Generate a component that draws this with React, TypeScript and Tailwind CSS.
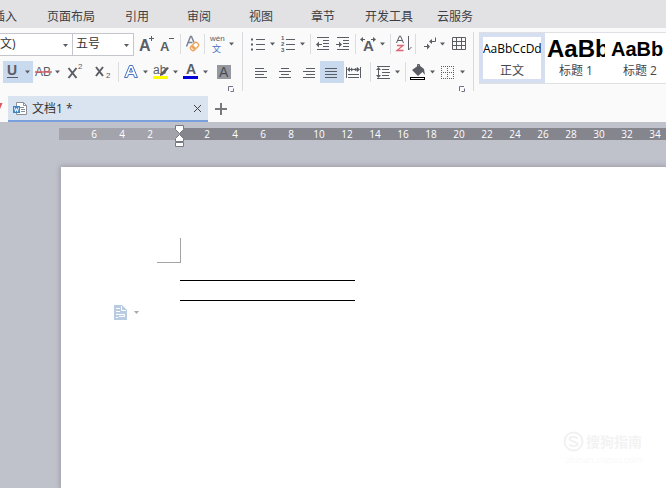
import type { ReactNode } from "react";

const UI = "font-['Open_Sans','Noto_Sans_CJK_SC',sans-serif]";
const COMPACT = "font-['Liberation_Sans','Noto_Sans_CJK_SC',sans-serif]";
const INK = "#5b5d64";
const BLUE = "#4472c4";

const menus = ["插入", "页面布局", "引用", "审阅", "视图", "章节", "开发工具", "云服务"];
const leftTicks = [6, 4, 2];
const rightTicks = [2, 4, 6, 8, 10, 12, 14, 16, 18, 20, 22, 24, 26, 28, 30, 32, 34];

function Tool({ label, w, active, children }: { label: string; w: number; active?: boolean; children: ReactNode }) {
  return (
    <button
      type="button"
      aria-label={label}
      aria-pressed={active}
      className={`h-[22px] shrink-0 ${active ? "bg-[#c9d9ee]" : "hover:bg-[#e6edf7]"}`}
    >
      <svg width={w} height={22} viewBox={`0 0 ${w} 22`} fill="none" stroke={INK} className="block" aria-hidden="true">
        {children}
      </svg>
    </button>
  );
}

function Sep() {
  return <span className="mx-0.5 h-5 w-px shrink-0 bg-[#dcdde0]" />;
}

function Caret({ x }: { x: number }) {
  return <path d={`M${x} 9.5h5l-2.5 3z`} fill={INK} stroke="none" />;
}

function Glyph({ x, y, size, color = INK, bold, children }: { x: number; y: number; size: number; color?: string; bold?: boolean; children: string }) {
  return (
    <text x={x} y={y} fontSize={size} fill={color} stroke="none" fontWeight={bold ? 700 : 400} className={COMPACT}>
      {children}
    </text>
  );
}

function Lines({ rows }: { rows: [number, number, number][] }) {
  return (
    <>
      {rows.map(([x1, x2, y]) => (
        <path key={y} d={`M${x1} ${y + 0.5}H${x2}`} />
      ))}
    </>
  );
}

function Launcher({ label }: { label: string }) {
  return (
    <button type="button" aria-label={label} className="mr-2 block self-end">
      <svg width="6" height="6" viewBox="0 0 6 6" fill="none" stroke="#70708a" className="block" aria-hidden="true">
        <path d="M.5 5V.5H5M2.5 5.500h3v-3" />
      </svg>
    </button>
  );
}

function Picker({ label, value, className }: { label: string; value: string; className: string }) {
  return (
    <div className={`relative h-[23px] shrink-0 border border-[#c4c6cc] bg-white ${className}`}>
      <select aria-label={label} className="block h-full w-full appearance-none bg-transparent text-xs leading-4 text-[#333]">
        <option>{value}</option>
      </select>
      <svg width="5" height="3" viewBox="0 0 5 3" className="pointer-events-none absolute top-2.5 right-1" aria-hidden="true">
        <path d="M0 0h5L2.500 3z" fill={INK} />
      </svg>
    </div>
  );
}

function FontGroup() {
  return (
    <section aria-label="字体" className="flex w-[242px] shrink-0 flex-col">
      <div className="flex h-6 items-center">
        <Picker label="字体" value="文)" className="w-[73px] border-l-0" />
        <Picker label="字号" value="五号" className="w-[61px] border-l-0 pl-[3px]" />
        <Tool label="增大字号" w={22}>
          <Glyph x={5} y={18} size={16} bold>A</Glyph>
          <path d="M15 5.500h5M17.500 3v5" />
        </Tool>
        <Tool label="减小字号" w={22}>
          <Glyph x={4} y={18} size={13} bold>A</Glyph>
          <path d="M13 5.500h5" />
        </Tool>
        <Sep />
        <Tool label="清除格式" w={19}>
          <path d="M3.500 13.500 7.500 3.500h1l2.500 6M5.500 9.500h4" stroke="#7a8494" strokeWidth="1.500" />
          <rect x="7" y="11" width="9" height="5" rx="2" transform="rotate(-45 11.500 13.500)" fill="#fff" stroke="#eda55d" strokeWidth="1.300" />
          <path d="m8 14 3 3 2-2-3-3z" fill="#eda55d" stroke="none" />
        </Tool>
        <Sep />
        <Tool label="拼音指南" w={30}>
          <Glyph x={3} y={8} size={8}>wén</Glyph>
          <Glyph x={5} y={19} size={9} color={BLUE}>文</Glyph>
          <Caret x={22} />
        </Tool>
      </div>
      <div className="mt-1 flex h-6 items-center pl-[3px]">
        <Tool label="下划线" w={30} active>
          <Glyph x={4} y={14} size={14} bold>U</Glyph>
          <path d="M4 16.500h11" />
          <Caret x={22} />
        </Tool>
        <Tool label="删除线" w={30}>
          <Glyph x={2} y={15} size={12}>AB</Glyph>
          <path d="M2 11h17" stroke="#d9606a" strokeWidth="1.500" />
          <Caret x={22} />
        </Tool>
        <Tool label="上标" w={30}>
          <path d="m5.500 7 8 10M13.500 7l-8 10" strokeWidth="2" />
          <Glyph x={15} y={8} size={8}>2</Glyph>
        </Tool>
        <Tool label="下标" w={23}>
          <path d="m3 6 7 9M10 6l-7 9" strokeWidth="2" />
          <Glyph x={13} y={17} size={8}>2</Glyph>
        </Tool>
        <Sep />
        <Tool label="文字效果" w={30}>
          <path d="M3.500 16.500 8.500 4.500h3l5 12h-3l-1-3h-5l-1 3zM8.500 11h3L10 7z" stroke={BLUE} fill="#fff" />
          <Caret x={22} />
        </Tool>
        <Tool label="突出显示" w={30}>
          <Glyph x={2} y={13} size={12}>ab</Glyph>
          <path d="m9 13 7-7 2 1-6 7-3 1z" fill={INK} stroke="none" />
          <rect x="2" y="15" width="15" height="3" fill="#ffff00" stroke="none" />
          <Caret x={22} />
        </Tool>
        <Tool label="字体颜色" w={30}>
          <Glyph x={5} y={13} size={14} bold>A</Glyph>
          <rect x="2" y="15" width="15" height="3" fill="#0000d8" stroke="none" />
          <Caret x={22} />
        </Tool>
        <Tool label="字符底纹" w={25}>
          <rect x="6" y="4" width="14" height="14" fill="#95989e" stroke="none" />
          <Glyph x={8} y={16} size={14} color="#4a4c52">A</Glyph>
        </Tool>
      </div>
      <div className="mt-0.5 flex flex-col">
        <Launcher label="字体设置" />
      </div>
    </section>
  );
}

function ParagraphGroup() {
  return (
    <section aria-label="段落" className="flex w-[230px] shrink-0 flex-col">
      <div className="flex h-6 items-center pl-[5px]">
        <Tool label="项目符号" w={30}>
          <Lines rows={[[8, 17, 6], [8, 17, 11], [8, 17, 16]]} />
          <path d="M3 6.500h2M3 11.500h2M3 16.500h2" strokeWidth="2" />
          <Caret x={22} />
        </Tool>
        <Tool label="编号" w={30}>
          <Lines rows={[[8, 17, 6], [8, 17, 11], [8, 17, 16]]} />
          <Glyph x={3} y={7} size={6} bold>1</Glyph>
          <Glyph x={3} y={13} size={6} bold>2</Glyph>
          <Glyph x={3} y={19} size={6} bold>3</Glyph>
          <Caret x={22} />
        </Tool>
        <Sep />
        <Tool label="减少缩进" w={20}>
          <Lines rows={[[4, 16, 4], [10, 16, 7], [10, 16, 10], [10, 16, 13], [4, 16, 16]]} />
          <path d="M4 11.500h5" />
          <path d="m3 11.500 3-3v6z" fill={INK} stroke="none" />
        </Tool>
        <Tool label="增加缩进" w={20}>
          <Lines rows={[[4, 16, 4], [10, 16, 7], [10, 16, 10], [10, 16, 13], [4, 16, 16]]} />
          <path d="M3 11.500h5" />
          <path d="m9 11.500-3-3v6z" fill={INK} stroke="none" />
        </Tool>
        <Sep />
        <Tool label="中文版式" w={30}>
          <Glyph x={5} y={18} size={15} bold>A</Glyph>
          <path d="M3 6.500h4M13 6.500h4" />
          <path d="m2 6.500 3-2.500v5zM18 6.500l-3-2.500v5z" fill={INK} stroke="none" />
          <Caret x={22} />
        </Tool>
        <Sep />
        <Tool label="排序" w={20}>
          <path d="m3.500 10 3-7h1l3 7M4.500 7.500h5" />
          <path d="M4 12.500h6l-6 5h6.500" stroke="#dc6570" strokeWidth="1.300" />
          <path d="M15.500 3v14l3-3" />
        </Tool>
        <Sep />
        <Tool label="显示段落标记" w={30}>
          <path d="M17.500 4.500v4h-5M6 13.500h4" />
          <path d="m11 8.500 3-2.500v5zM12 13.500l-3-3v6z" fill={INK} stroke="none" />
          <Caret x={22} />
        </Tool>
        <Tool label="表格" w={20}>
          <path d="M4.500 4.500h13v12h-13zM4.500 8.500h13M4.500 12.500h13M8.500 4.500v12M13.500 4.500v12" />
        </Tool>
      </div>
      <div className="mt-1 flex h-6 items-center pl-[5px]">
        <Tool label="左对齐" w={24}>
          <Lines rows={[[7, 16, 7], [7, 19, 10], [7, 16, 13], [7, 19, 16]]} />
        </Tool>
        <Tool label="居中" w={24}>
          <Lines rows={[[9, 17, 7], [7, 19, 10], [9, 17, 13], [7, 19, 16]]} />
        </Tool>
        <Tool label="右对齐" w={24}>
          <Lines rows={[[10, 19, 7], [7, 19, 10], [10, 19, 13], [7, 19, 16]]} />
        </Tool>
        <Tool label="两端对齐" w={24} active>
          <Lines rows={[[5, 17, 7], [5, 17, 10], [5, 17, 13], [5, 17, 16]]} />
        </Tool>
        <Tool label="分散对齐" w={24}>
          <path d="M2.500 6v11M16.500 6v11M4 8.500h11" />
          <path d="m3 8.500 3-2.500v5zM16 8.500l-3-2.500v5zM9.500 8.500 7 6.500v4zM9.500 8.500l3-2v4z" fill={INK} stroke="none" />
          <Lines rows={[[4, 15, 13], [4, 15, 16]]} />
        </Tool>
        <Sep />
        <Tool label="行距" w={30}>
          <Lines rows={[[4, 17, 5], [9, 16, 8], [9, 17, 11], [9, 16, 14], [4, 17, 17]]} />
          <path d="M5.500 8v7" />
          <path d="m5.500 6 2.500 3H3zM5.500 17 3 14h5z" fill={INK} stroke="none" />
          <Caret x={22} />
        </Tool>
        <Sep />
        <Tool label="底纹颜色" w={30}>
          <path d="m4 9 7-5 5 4 1 6-2.500-3-4.500 4z" fill={INK} stroke="none" />
          <path d="M11.500 7V3.500h-2V7" />
          <rect x="2.500" y="16.500" width="14" height="2" fill="#fff" stroke="#000" />
          <Caret x={22} />
        </Tool>
        <Tool label="边框" w={30}>
          <path d="M3 5.500h13M3 11.500h13M3 17.500h13M3.500 5v13M9.500 5v13M15.500 5v13" strokeDasharray="1 1" />
          <Caret x={22} />
        </Tool>
      </div>
      <div className="mt-0.5 flex flex-col">
        <Launcher label="段落设置" />
      </div>
    </section>
  );
}

function StyleCard({ sample, name, sampleClass, active }: { sample: string; name: string; sampleClass: string; active?: boolean }) {
  return (
    <button
      type="button"
      aria-pressed={active}
      className={`flex shrink-0 flex-col items-center border-y-4 ${active ? "w-[66px] border-x-4 border-[#d5dff1]" : "w-16 border-r-4 border-l-2 border-transparent"}`}
    >
      <span className={`flex h-7 w-full items-center overflow-hidden whitespace-nowrap text-black ${sampleClass}`}>{sample}</span>
      <span className="pt-0.5 text-xs leading-4 text-[#44464c]">{name}</span>
    </button>
  );
}

function Ribbon() {
  return (
    <div className="flex h-[67px] overflow-hidden bg-[#fafafb] pt-1">
      <FontGroup />
      <span className="h-[59px] w-px shrink-0 bg-[#d9dade]" />
      <ParagraphGroup />
      <span className="h-[59px] w-px shrink-0 bg-[#d9dade]" />
      <section aria-label="样式" className="ml-[5px] flex h-[52px] min-w-0 flex-1 overflow-hidden border-y border-[#dfe0e3] bg-white">
        <StyleCard active sample="AaBbCcDd" name="正文" sampleClass="text-xs" />
        <StyleCard sample="AaBb" name="标题 1" sampleClass="font-['Liberation_Sans',Arial,sans-serif] text-2xl font-bold" />
        <StyleCard sample="AaBb" name="标题 2" sampleClass="font-['Liberation_Sans',Arial,sans-serif] text-xl font-bold" />
      </section>
    </div>
  );
}

function TabStrip() {
  return (
    <div className="flex h-[27px] items-end bg-[#fafafb]">
      <svg width="8" height="26" viewBox="0 0 8 26" className="shrink-0" aria-hidden="true">
        <path d="M0 7h2.500L0 13z" fill="#dc5560" />
      </svg>
      <div className="flex h-[26px] w-[200px] items-center border-b-2 border-[#7ba0de] bg-[#dae4f1] pr-1.5 pl-[5px]">
        <svg width="14" height="15" viewBox="0 0 14 15" fill="none" aria-hidden="true">
          <path d="M3.500 1.500h7l3 3v9h-10z" fill="#fff" stroke="#8a9099" />
          <path d="M10.500 1.500v3h3M6 6.500h5M8 8.500h4M8 10.500h4" stroke="#8a9099" />
          <path d="M0 5h7v7H0z" fill="#3f83c8" />
          <path d="m1.500 6.500 1 4 1-3 1 3 1-4" stroke="#fff" />
        </svg>
        <span className="ml-[5px] flex-1 pt-0.5 text-xs text-[#333]">文档1 *</span>
        <button type="button" aria-label="关闭">
          <svg width="9" height="9" viewBox="0 0 9 9" stroke="#444" className="block" aria-hidden="true">
            <path d="m1 1 7 7M8 1 1 8" />
          </svg>
        </button>
      </div>
      <button type="button" aria-label="新建" className="ml-[7px] self-center">
        <svg width="12" height="12" viewBox="0 0 12 12" stroke="#77797f" strokeWidth="2" className="block" aria-hidden="true">
          <path d="M0 6h12M6 0v12" />
        </svg>
      </button>
    </div>
  );
}

function Tick({ n }: { n: number }) {
  return <span className="w-7 shrink-0 text-center">{n}</span>;
}

function Ruler() {
  return (
    <div className="ml-[59px] flex h-3 text-[10px] leading-3 text-white">
      <div className="flex w-[121px] shrink-0 justify-end bg-[#a2a3ab] pr-4">
        {leftTicks.map((n) => <Tick key={n} n={n} />)}
      </div>
      <div className="relative min-w-0 flex-1 bg-[#84858d]">
        <div className="flex overflow-hidden pl-[13px]">
          {rightTicks.map((n) => <Tick key={n} n={n} />)}
        </div>
        <svg width="9" height="22" viewBox="0 0 9 22" fill="#fff" stroke="#777981" className="absolute -top-[3px] -left-[5px]" aria-hidden="true">
          <path d="M.5.5h8v4l-4 4-4-4zM4.500 9.500l4 4v3h-8v-3zM.5 17.500h8v4h-8z" />
        </svg>
      </div>
    </div>
  );
}

function Page() {
  return (
    <main className="relative mt-[27px] ml-[61px] flex-1 bg-white pt-[71px] shadow-[0_0_5px_1px_#9a9ba5]">
      <div className="ml-24 h-[25px] w-6 border-r border-b border-[#a3a3a3]" />
      <div className="mt-[17px] ml-[119px] h-[21px] w-[175px] border-y border-black" />
      <button type="button" aria-label="段落工具" className="mt-1 ml-[53px] flex items-center gap-[7px]">
        <svg width="13" height="15" viewBox="0 0 13 15" fill="none" aria-hidden="true">
          <path d="M0 0h8l5 5v10H0z" fill="#b9cbe2" />
          <path d="M7.500 1v4.500H12M2 3.500h4M2 6.500h4M2 9.500h8.500v2H5M2 12.500h2" stroke="#fff" />
        </svg>
        <svg width="5" height="3" viewBox="0 0 5 3" aria-hidden="true">
          <path d="M0 0h5L2.500 3z" fill="#aaa" />
        </svg>
      </button>
      <div className="absolute right-6 bottom-5 flex flex-col items-end text-[#f3f3f3]">
        <div className="flex items-center gap-0.5">
          <svg width="21" height="21" viewBox="0 0 21 21" fill="none" stroke="#f1f1f1" strokeWidth="2" aria-hidden="true">
            <circle cx="10.500" cy="10.500" r="9" />
            <path d="M14.500 7.500c-2-2-8-2-8 .5s8 2.500 8 5-6 2.500-8.500.5" />
          </svg>
          <span className="text-sm leading-5 font-bold">搜狗指南</span>
        </div>
        <span className="text-[9px] leading-4 text-[#f9f9f9]">zhinan.sogou.com</span>
      </div>
    </main>
  );
}

export default function App() {
  return (
    <div className={`flex min-h-screen flex-col overflow-hidden ${UI}`}>
      <nav className="h-7 overflow-hidden bg-[#e2e2e5]">
        <div className="-ml-[26px] flex h-full items-center pt-1.5 text-xs text-[#3c3e43]">
          {menus.map((m) => (
            <button key={m} type="button" className={`shrink-0 whitespace-nowrap ${m.length === 4 ? "w-[70px]" : "w-[62px]"}`}>
              {m}
            </button>
          ))}
        </div>
      </nav>
      <Ribbon />
      <TabStrip />
      <div className="flex flex-1 flex-col bg-[#bfc1cb] pt-1.5">
        <Ruler />
        <Page />
      </div>
    </div>
  );
}
